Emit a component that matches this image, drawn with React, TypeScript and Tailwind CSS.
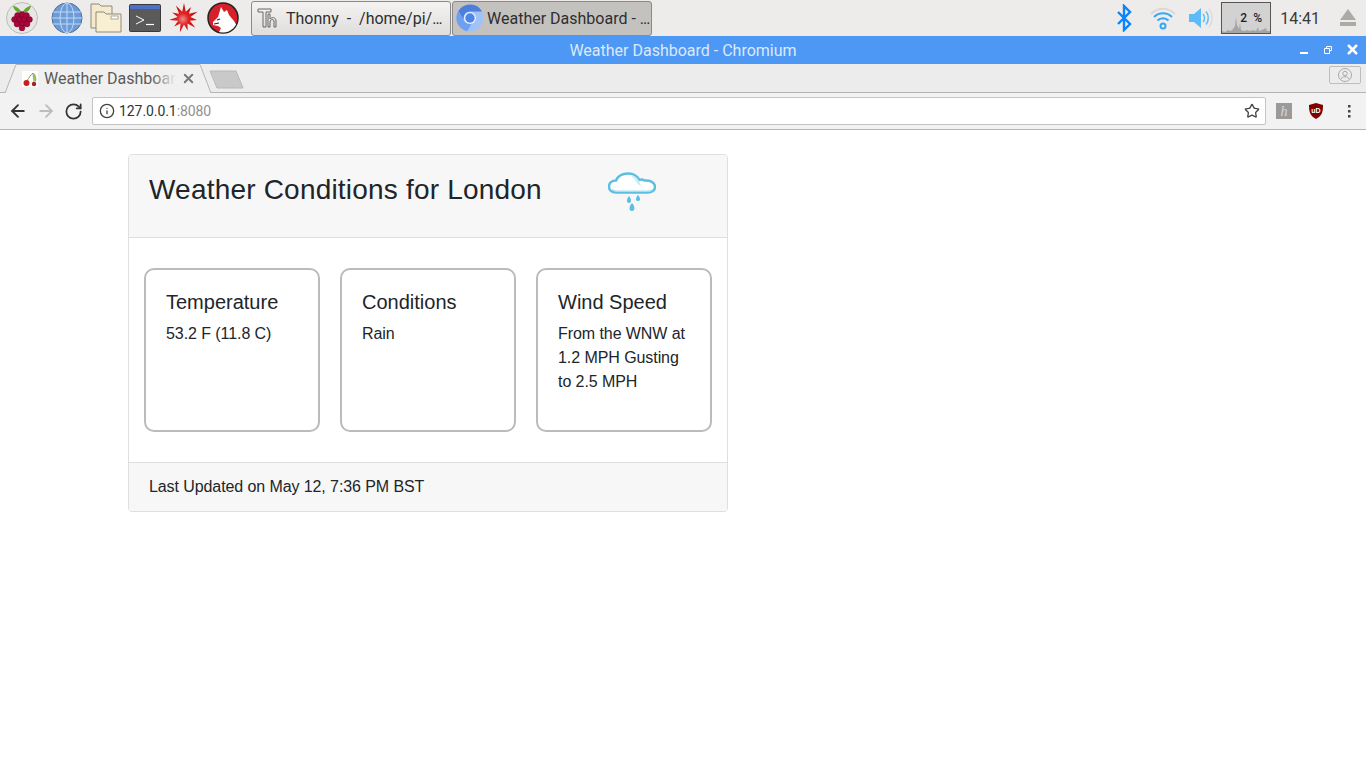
import React from 'react';
import { ArrowLeft, ArrowRight, RotateCw, Info, Star, X } from 'lucide-react';

const Raspberry = () => (
    <div className="w-[32px] h-[32px] rounded-full border border-[#bdbdbd] bg-[#e6e6e4] flex items-center justify-center">
        <svg width="24" height="26" viewBox="0 0 24 26">
            <path d="M12 8C9 3 6 1 3 1c1 4 4 7 9 7zm0 0c3-5 6-7 9-7-1 4-4 7-9 7z" fill="#5fa82c" />
            {[[7.5, 10.5], [12, 9.5], [16.5, 10.5], [4.5, 14.5], [9.5, 14.5], [14.5, 14.5], [19.5, 14.5], [7, 19], [12, 19], [17, 19], [12, 23]].map(([cx, cy], i) => (
                <circle key={i} cx={cx} cy={cy} r="2.900" fill="#a8063a" stroke="#70002a" strokeWidth="0.5" />
            ))}
        </svg>
    </div>
);

const Globe = () => (
    <svg width="32" height="32" viewBox="0 0 32 32">
        <circle cx="16" cy="16" r="15" fill="#6b9bd8" stroke="#4f6f99" />
        <g fill="none" stroke="#c5d9f1" strokeWidth="1">
            <ellipse cx="16" cy="16" rx="7" ry="15" />
            <path d="M16 1v30M2 10h28M1 16h30M2 22h28" />
        </g>
    </svg>
);

const Folders = () => (
    <svg width="32" height="30" viewBox="0 0 32 30">
        <path d="M1 1h8l2 2h11v22H1z" fill="#f3ead0" stroke="#8f8a76" />
        <path d="M6 9h8l2 2h15v18H6z" fill="#f8efd2" stroke="#8f8a76" />
        <rect x="21" y="13" width="7" height="3" fill="#fff" stroke="#8f8a76" strokeWidth="0.7" />
    </svg>
);

const Terminal = () => (
    <svg width="32" height="28" viewBox="0 0 32 28">
        <rect x="0.5" y="0.5" width="31" height="27" rx="1" fill="#5a5a5a" stroke="#3a3a3a" />
        <rect x="1" y="1" width="30" height="4" fill="#4a70c9" />
        <path d="M7 12l8 4-8 4" fill="none" stroke="#fff" strokeWidth="1" />
        <path d="M17 20.500h8" stroke="#fff" strokeWidth="1.200" />
    </svg>
);

const starPoints = Array.from({ length: 22 }, (_, i) => {
    const spike = i % 2 === 0;
    const r = spike ? (i % 4 === 0 ? 15 : 13) : 6.5;
    const a = (i / 22) * Math.PI * 2 - Math.PI / 2;
    return `${(15 + r * Math.cos(a)).toFixed(1)},${(15 + r * Math.sin(a)).toFixed(1)}`;
}).join(' ');

const Mathematica = () => (
    <svg width="30" height="30" viewBox="0 0 30 30">
        <defs>
            <radialGradient id="star" cx="0.48" cy="0.55" r="0.45">
                <stop offset="0" stopColor="#f08c8c" />
                <stop offset="0.45" stopColor="#e02222" />
                <stop offset="1" stopColor="#c01010" />
            </radialGradient>
        </defs>
        <polygon points={starPoints} fill="url(#star)" />
    </svg>
);

const Wolfram = () => (
    <svg width="32" height="32" viewBox="0 0 32 32">
        <defs>
            <clipPath id="wolf-clip"><circle cx="16" cy="16" r="14.500" /></clipPath>
        </defs>
        <circle cx="16" cy="16" r="15" fill="#d8202a" stroke="#222" strokeWidth="1.500" />
        <path d="M14 5l3 5 3-2 2 5 5 6 3 5-8 8H11l3-6-3-2-5-1v-3l5-5z" fill="#fff" clipPath="url(#wolf-clip)" />
        <path d="M10 18l3-1M7 22l5-1" stroke="#222" strokeWidth="1.200" />
    </svg>
);

const ThonnyIcon = () => (
    <svg width="22" height="24" viewBox="0 0 22 24" fill="none" stroke="#666" strokeWidth="1">
        <path d="M1 3h13v3H9v15H6V6H1zM11 8h2v5c2-2 6-2 6 2v6h-2v-6c0-2-4-2-4 1v5h-2z" />
    </svg>
);

const ChromiumIcon = () => (
    <svg width="28" height="28" viewBox="0 0 30 30" className="shrink-0">
        <circle cx="15" cy="15" r="14.500" fill="#a1c2f6" />
        <path d="M15 .5A14.500 14.500 0 0 0 2.500 7.500l6.500 11A7 7 0 0 1 15 8h13A14.500 14.500 0 0 0 15 .5z" fill="#4b7fd9" />
        <path d="M2.500 7.500A14.500 14.500 0 0 0 12 29.200L18 19a7 7 0 0 1-9 0z" fill="#6e9ff0" />
        <circle cx="15" cy="15" r="6.500" fill="#e8f0fc" />
        <circle cx="15" cy="15" r="5" fill="#4b85e8" />
    </svg>
);

const Bluetooth = () => (
    <svg width="16" height="28" viewBox="0 0 16 28" fill="none" stroke="#0a84ff" strokeWidth="2.400">
        <path d="M2 8l12 12-6 6V2l6 6L2 20" />
    </svg>
);

const Wifi = () => (
    <svg width="26" height="24" viewBox="0 0 26 24" fill="none" strokeWidth="2">
        <path d="M1 8c7-7 17-7 24 0" stroke="#d9d9d9" />
        <path d="M4 11c5-5 13-5 18 0M7.500 14.500c3-3 8-3 11 0" stroke="#35a8f5" />
        <circle cx="13" cy="20" r="2.500" stroke="#35a8f5" />
    </svg>
);

const Volume = () => (
    <svg width="26" height="24" viewBox="0 0 26 24" fill="none">
        <path d="M1 8h5l7-6v20l-7-6H1z" fill="#5cbcf8" />
        <path d="M15 8c2 2 2 6 0 8M18 5.500c3 3 3 10 0 13" stroke="#5cbcf8" strokeWidth="1.500" />
        <path d="M21 3c4 4 4 14 0 18" stroke="#dcdcdc" strokeWidth="1.500" />
    </svg>
);

const CpuGraph = () => (
    <div className="relative w-[50px] h-[32px] bg-[#d2d2d2] border border-[#555]">
        <svg className="absolute left-0 bottom-0" width="48" height="18" viewBox="0 0 48 18">
            <polygon points="0,18 0,16 3,17 6,15 9,16 11,14 13,11 14,2 15,10 17,14 18,8 19,15 22,16 25,15 28,16 31,15 34,16 36,12 37,16 40,15 44,13 45,16 48,16 48,18" fill="#a5a5a5" />
        </svg>
        <span className="absolute left-[18px] top-[7px] text-[12px] leading-[16px] font-medium text-[#222]">2</span>
        <span className="absolute left-[31px] top-[7px] text-[12px] leading-[16px] font-medium text-[#222]">%</span>
    </div>
);

const Eject = () => (
    <svg width="16" height="18" viewBox="0 0 16 18" fill="#aaaaa6">
        <path d="M8 0l8 11H0z" />
        <rect x="0" y="13" width="16" height="4" />
    </svg>
);

const Cherries = () => (
    <svg width="16" height="16" viewBox="0 0 16 16" className="shrink-0">
        <rect width="16" height="16" fill="#fff" />
        <path d="M5 10C7 6 9 4 11 2c1 4 1 7 1 9" fill="none" stroke="#8a9a50" />
        <path d="M11 2c3 1 4 5 3 9-3-2-4-5-3-9z" fill="#9cba6a" />
        <circle cx="4.500" cy="12" r="3" fill="#c5201f" />
        <circle cx="12" cy="13" r="2.200" fill="#a82218" />
    </svg>
);

const Avatar = () => (
    <div className="w-[32px] h-[18px] border border-[#bdbdbd] rounded-[2px] flex items-center justify-center">
        <svg width="14" height="14" viewBox="0 0 14 14" fill="none" stroke="#a8a8a8">
            <circle cx="7" cy="7" r="6.500" />
            <circle cx="7" cy="5.500" r="2.200" />
            <path d="M3 11c1-3 7-3 8 0" />
        </svg>
    </div>
);

function Tile({ title, children }: { title: string; children: React.ReactNode }) {
    return (
        <div className="h-[164px] border-2 border-[#bbbbbb] rounded-[10px] pt-[20px] pl-[20px] pr-[20px]">
            <h5 className="text-[20px] leading-[24px] text-[#212529] mb-[8px]">{title}</h5>
            <p className="text-[16px] leading-[24px] tracking-[-0.07px] text-[#212529]">{children}</p>
        </div>
    );
}

export default function App() {
    return (
        <div className="h-[768px] bg-white overflow-hidden font-['Liberation_Sans',Arial,sans-serif]">
            {/* desktop panel */}
            <div className="h-[36px] bg-[#edecea] flex items-center font-['Roboto',sans-serif]">
                <div className="ml-[6px]"><Raspberry /></div>
                <div className="ml-[13px]"><Globe /></div>
                <div className="ml-[7px]"><Folders /></div>
                <div className="ml-[7px]"><Terminal /></div>
                <div className="ml-[8px]"><Mathematica /></div>
                <div className="ml-[8px]"><Wolfram /></div>
                <div className="ml-[12px] w-[200px] h-[35px] border border-[#8a8a8a] rounded-[3px] bg-gradient-to-b from-[#f4f3f1] to-[#dfdedc] flex items-center pl-[5px] gap-[7px] text-[16px] text-[#2e2e2e] whitespace-pre">
                    <ThonnyIcon />
                    <span className="pt-[1px]">Thonny  -  /home/pi/<span className="tracking-[-1px]">...</span></span>
                </div>
                <div className="ml-[1px] w-[200px] h-[35px] border border-[#8a8a8a] rounded-[3px] bg-[#c4c2bf] flex items-center pl-[3px] gap-[3px] text-[16px] text-[#2e2e2e] whitespace-pre">
                    <ChromiumIcon />
                    <span className="pt-[1px]">Weather Dashboard - <span className="tracking-[-1px]">...</span></span>
                </div>
                <div className="ml-auto flex items-center">
                    <Bluetooth />
                    <div className="ml-[18px]"><Wifi /></div>
                    <div className="ml-[12px]"><Volume /></div>
                    <div className="ml-[7px]"><CpuGraph /></div>
                    <span className="ml-[9px] pt-[1px] text-[16px] text-[#3a3a3a]">14:41</span>
                    <div className="ml-[20px] mr-[10px]"><Eject /></div>
                </div>
            </div>

            {/* window title */}
            <div className="relative h-[28px] bg-[#4d98f5] flex items-center justify-center pt-[1px] font-['Roboto',sans-serif] text-[16px] text-[#dbe9fb]">
                Weather Dashboard - Chromium
                <div className="absolute right-[10px] top-[6px] flex items-center gap-[16px]">
                    <svg width="8" height="10" viewBox="0 0 8 10"><rect x="0" y="7" width="8" height="2" fill="#fff" /></svg>
                    <svg width="8" height="10" viewBox="0 0 8 10" fill="none" stroke="#fff"><path d="M2.500 3V1.500h5v4H6M.5 3.500h5v5h-5z" /></svg>
                    <X size={15} color="#fff" strokeWidth={4} className="-mx-[3.5px]" />
                </div>
            </div>

            {/* tab strip */}
            <div className="relative h-[29px] bg-[#ececec] border-b border-[#b4b4b4] flex font-['Roboto',sans-serif]">
                <div className="relative ml-[5px] w-[206px] h-[29px] flex items-center pl-[17px]">
                    <svg className="absolute left-0 top-0" width="206" height="29" viewBox="0 0 206 29">
                        <path d="M0 29L11 .5h184L206 29" fill="#f0f0f0" stroke="#b4b4b4" />
                    </svg>
                    <div className="relative flex items-center">
                        <Cherries />
                        <div className="relative ml-[6px] w-[132px] overflow-hidden whitespace-nowrap text-[16px] text-[#5a5a5a]">
                            Weather Dashboard
                            <div className="absolute right-0 top-0 bottom-0 w-[24px] bg-gradient-to-r from-transparent to-[#f0f0f0]" />
                        </div>
                        <X size={15} color="#777" strokeWidth={3} className="ml-[5px]" />
                    </div>
                </div>
                <svg className="mt-[6px] -ml-[2px]" width="36" height="19" viewBox="0 0 36 19">
                    <path d="M1 1h26l7 17H8z" fill="#c9c9c9" stroke="#b8b8b8" />
                </svg>
                <div className="ml-auto mr-[5px] mt-[2px]"><Avatar /></div>
            </div>

            {/* toolbar */}
            <div className="h-[37px] bg-[#f2f2f2] border-b border-[#b4b4b4] flex items-center pl-[8px] font-['Roboto',sans-serif]">
                <ArrowLeft size={20} color="#333" strokeWidth={2.200} />
                <ArrowRight size={20} color="#bdbdbd" strokeWidth={2.200} className="ml-[8px]" />
                <RotateCw size={19} color="#333" strokeWidth={2.200} className="ml-[8px]" />
                <div className="ml-[9px] w-[1174px] h-[28px] bg-white border border-[#c4c4c4] rounded-[2px] flex items-center pl-[6px] pr-[5px] text-[14px] tracking-[-0.07px]">
                    <Info size={16} color="#444" strokeWidth={2} />
                    <span className="ml-[4px] text-[#333]">127.0.0.1</span>
                    <span className="text-[#909090]">:8080</span>
                    <Star size={16} color="#444" strokeWidth={2} className="ml-auto" />
                </div>
                <div className="ml-[10px] w-[16px] h-[16px] bg-[#9a9a9a] flex items-center justify-center font-['Liberation_Serif',serif] italic text-[14px] text-[#d8d8d8]">h</div>
                <svg className="ml-[16px]" width="16" height="18" viewBox="0 0 16 18">
                    <path d="M8 1l7 2c0 7-1 11-7 14C2 14 1 10 1 3z" fill="#800000" />
                    <text x="8" y="11" textAnchor="middle" fontSize="7" fontWeight="700" fill="#fff" fontFamily="Liberation Sans">uD</text>
                </svg>
                <svg className="ml-[23px]" width="4" height="14" viewBox="0 0 4 14" fill="#444">
                    <rect x="1" y="1" width="2.500" height="2.500" />
                    <rect x="1" y="6" width="2.500" height="2.500" />
                    <rect x="1" y="11" width="2.500" height="2.500" />
                </svg>
            </div>

            {/* page */}
            <div className="pt-[24px] pl-[128px]">
                <div className="w-[600px] border border-[#dfdfdf] rounded-[4px] overflow-hidden text-[#212529]">
                    <div className="h-[83px] bg-[#f7f7f7] border-b border-[#dfdfdf] flex pl-[20px] pt-[16px]">
                        <h3 className="w-[392px] whitespace-nowrap text-[28px] leading-[37px] tracking-[0.2px]">Weather Conditions for London</h3>
                        <svg className="ml-[67px] mt-[1px]" width="48" height="42" viewBox="0 0 48 42">
                            <path d="M8 20.500C3.500 20.500 1 18 1 14.500 1 11 4 8.500 8 8.500 10 4 15 1.500 20 1.500c6 0 10 3 11 6.500 2-1 4-.5 5.500.5C41 8 47 10 47 15c0 4-4 5.500-7 5.500z" fill="#fff" stroke="#5cbfe2" strokeWidth="2.500" />
                            <path d="M4 17c1 1.500 3 2 5 2h30c3 0 5-.5 6-2-1 2-3 2.500-6 2.500H9c-2 0-4-1-5-2.500z" fill="#a8dff0" stroke="#a8dff0" />
                            <path d="M23 4c4 0 7 2 8 5 1 2 1 4 3 5-4-1-5-3-6-5-1-2-3-4-5-5z" fill="#c4ecf6" />
                            <path d="M21 24c2.500 3 3 7 0 7-3 0-2.500-4 0-7zM30 23c2.500 3 3 6 0 6-3 0-2.500-3 0-6zM24 31c3 3 3.500 8 0 8-3.500 0-3-5 0-8z" fill="#5cbfe2" />
                        </svg>
                    </div>
                    <div className="grid grid-cols-3 gap-[20px] px-[15px] pt-[30px] pb-[30px]">
                        <Tile title="Temperature">53.2 F (11.8 C)</Tile>
                        <Tile title="Conditions">Rain</Tile>
                        <Tile title="Wind Speed">From the WNW at 1.2 MPH Gusting to 2.5 MPH</Tile>
                    </div>
                    <div className="h-[49px] bg-[#f7f7f7] border-t border-[#dfdfdf] pl-[20px] pt-[12px] text-[16px] leading-[24px] tracking-[-0.09px]">
                        Last Updated on May 12, 7:36 PM BST
                    </div>
                </div>
            </div>
        </div>
    );
}
